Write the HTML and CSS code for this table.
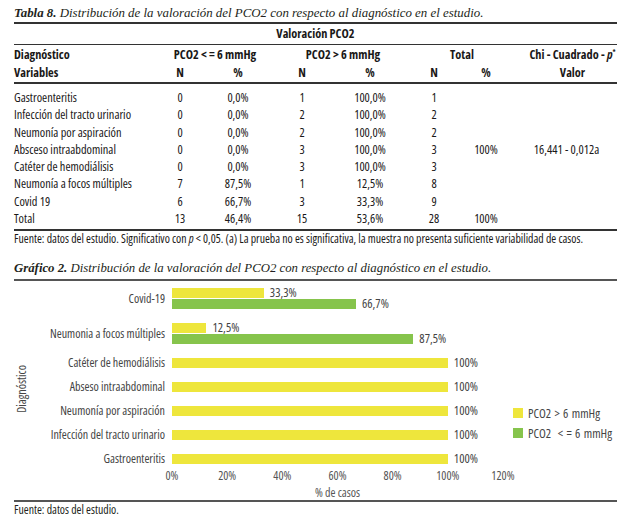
FILE: index.html
```html
<!DOCTYPE html>
<html lang="es">
<head>
<meta charset="utf-8">
<title>Tabla 8 y Gráfico 2</title>
<link rel="stylesheet" href="styles.css">
</head>
<body>
<div class="page">
  <p class="caption"><b>Tabla 8.</b> Distribución de la valoración del PCO2 con respecto al diagnóstico en el estudio.</p>

  <div class="tbl">
    <div class="tbl-top">Valoración PCO2</div>
    <div class="tbl-head">
      <div class="c1">Diagnóstico</div>
      <div class="g1">PCO2 &lt; = 6 mmHg</div>
      <div class="g2">PCO2 &gt; 6 mmHg</div>
      <div class="g3">Total</div>
      <div class="c8">Chi - Cuadrado - <i>p</i><sup>*</sup></div>
      <div class="c1">Variables</div>
      <div>N</div><div>%</div><div>N</div><div>%</div><div>N</div><div>%</div>
      <div class="c8">Valor</div>
    </div>
    <div class="tbl-body">
      <div class="c1">Gastroenteritis</div><div>0</div><div>0,0%</div><div>1</div><div>100,0%</div><div>1</div><div></div><div></div>
      <div class="c1">Infección del tracto urinario</div><div>0</div><div>0,0%</div><div>2</div><div>100,0%</div><div>2</div><div></div><div></div>
      <div class="c1">Neumonía por aspiración</div><div>0</div><div>0,0%</div><div>2</div><div>100,0%</div><div>2</div><div></div><div></div>
      <div class="c1">Absceso intraabdominal</div><div>0</div><div>0,0%</div><div>3</div><div>100,0%</div><div>3</div><div>100%</div><div class="c8 cval">16,441 - 0,012a</div>
      <div class="c1">Catéter de hemodiálisis</div><div>0</div><div>0,0%</div><div>3</div><div>100,0%</div><div>3</div><div></div><div></div>
      <div class="c1">Neumonía a focos múltiples</div><div>7</div><div>87,5%</div><div>1</div><div>12,5%</div><div>8</div><div></div><div></div>
      <div class="c1">Covid 19</div><div>6</div><div>66,7%</div><div>3</div><div>33,3%</div><div>9</div><div></div><div></div>
      <div class="c1">Total</div><div>13</div><div>46,4%</div><div>15</div><div>53,6%</div><div>28</div><div>100%</div><div></div>
    </div>
  </div>
  <p class="note">Fuente: datos del estudio. Significativo con <i>p</i> &lt; 0,05. (a) La prueba no es significativa, la muestra no presenta suficiente variabilidad de casos.</p>

  <p class="caption caption2"><b>Gráfico 2.</b> Distribución de la valoración del PCO2 con respecto al diagnóstico en el estudio.</p>

  <div class="chart">
    <div class="chart-main">
      <div class="yaxis"><span>Diagnóstico</span></div>
      <div class="rows">
        <div class="row">
          <div class="cat">Covid-19</div>
          <div class="bars">
            <div class="barline"><div class="bar yel" style="width:27.75%"></div><span class="val">33,3%</span></div>
            <div class="barline"><div class="bar grn" style="width:55.58%"></div><span class="val">66,7%</span></div>
          </div>
        </div>
        <div class="row">
          <div class="cat">Neumonia a focos múltiples</div>
          <div class="bars">
            <div class="barline"><div class="bar yel" style="width:10.42%"></div><span class="val">12,5%</span></div>
            <div class="barline"><div class="bar grn" style="width:72.92%"></div><span class="val">87,5%</span></div>
          </div>
        </div>
        <div class="row">
          <div class="cat">Catéter de hemodiálisis</div>
          <div class="bars"><div class="barline"><div class="bar yel" style="width:83.33%"></div><span class="val">100%</span></div></div>
        </div>
        <div class="row">
          <div class="cat">Abseso intraabdominal</div>
          <div class="bars"><div class="barline"><div class="bar yel" style="width:83.33%"></div><span class="val">100%</span></div></div>
        </div>
        <div class="row">
          <div class="cat">Neumonía por aspiración</div>
          <div class="bars"><div class="barline"><div class="bar yel" style="width:83.33%"></div><span class="val">100%</span></div></div>
        </div>
        <div class="row">
          <div class="cat">Infección del tracto urinario</div>
          <div class="bars"><div class="barline"><div class="bar yel" style="width:83.33%"></div><span class="val">100%</span></div></div>
        </div>
        <div class="row">
          <div class="cat">Gastroenteritis</div>
          <div class="bars"><div class="barline"><div class="bar yel" style="width:83.33%"></div><span class="val">100%</span></div></div>
        </div>
      </div>
      <div class="legend">
        <div class="leg"><span class="sw yel"></span>PCO2 &gt; 6 mmHg</div>
        <div class="leg"><span class="sw grn"></span>PCO2 &nbsp;&lt; = 6 mmHg</div>
      </div>
    </div>
    <div class="axis">
      <div class="ticks"><span>0%</span><span>20%</span><span>40%</span><span>60%</span><span>80%</span><span>100%</span><span>120%</span></div>
      <div class="axis-title">% de casos</div>
    </div>
  </div>
  <p class="note note2">Fuente: datos del estudio.</p>
</div>
</body>
</html>
```

FILE: styles.css
```css
html, body {
  margin: 0;
  padding: 0;
  background: #fff;
}

body {
  font-family: "Open Sans", "Liberation Sans", sans-serif;
  font-stretch: 75%;
  color: #1a1818;
}

.page {
  width: 603px;
  padding: 5px 13px 0 14px;
}

.caption {
  margin: 0;
  height: 17px;
  line-height: 16px;
  font-family: "Liberation Serif", serif;
  font-stretch: normal;
  font-style: italic;
  font-size: 12.9px;
  color: #231f20;
  white-space: nowrap;
}

.caption b {
  font-weight: bold;
}

.caption2 {
  margin-top: 15px;
  font-size: 12.8px;
}

.tbl {
  border-top: 2px solid #333;
  border-bottom: 2px solid #333;
  font-size: 12.3px;
}

.tbl-top {
  line-height: 20px;
  text-align: center;
  font-weight: bold;
  border-bottom: 1px solid #333;
}

.tbl-head,
.tbl-body {
  display: grid;
  grid-template-columns: 136px 60px 56px 72px 64px 64px 40px 111px;
  text-align: center;
}

.tbl-head {
  padding-top: 1px;
  grid-auto-rows: 18px;
  line-height: 18px;
  font-weight: bold;
  border-bottom: 2px solid #333;
}

.tbl-body {
  padding: 5px 0 2px;
  grid-auto-rows: 17.3px;
  line-height: 17.3px;
}

.c1 {
  text-align: left;
  white-space: nowrap;
}

.g1 {
  grid-column: span 2;
  padding-left: 14px;
  white-space: nowrap;
}

.g2 {
  grid-column: span 2;
  padding-left: 18px;
  white-space: nowrap;
}

.g3 {
  grid-column: span 2;
  padding-left: 16px;
}

.c8 {
  padding-left: 22px;
  white-space: nowrap;
}

.c8 sup {
  font-size: 7px;
  line-height: 0;
  vertical-align: 5px;
}

.cval {
  padding-left: 10px;
}

.note {
  margin: 0;
  line-height: 14px;
  font-size: 11.8px;
  white-space: nowrap;
}

.chart {
  margin-top: 2px;
  border-top: 2px solid #555;
  border-bottom: 2px solid #555;
  padding: 7px 0 0;
  color: #444;
  font-size: 12px;
}

.chart-main {
  display: flex;
  align-items: flex-start;
}

.yaxis {
  width: 16px;
  align-self: stretch;
  display: flex;
  align-items: center;
  justify-content: center;
  padding-top: 26px;
  box-sizing: border-box;
}

.yaxis span {
  writing-mode: vertical-rl;
  transform: rotate(180deg);
  font-size: 12px;
  line-height: 12px;
  white-space: nowrap;
}

.rows {
  display: flex;
  flex-direction: column;
  gap: 14px;
}

.row {
  display: flex;
  align-items: center;
}

.cat {
  width: 135px;
  margin-right: 7px;
  text-align: right;
  white-space: nowrap;
  line-height: 10px;
  font-size: 12px;
}

.bars {
  width: 331px;
  display: flex;
  flex-direction: column;
  gap: 1px;
}

.barline {
  display: flex;
  align-items: center;
  height: 10px;
}

.bar {
  height: 10px;
  flex-shrink: 0;
}

.yel {
  background: #eee63c;
}

.grn {
  background: #86c44c;
}

.val {
  margin-left: 6px;
  line-height: 10px;
  font-size: 12.5px;
  white-space: nowrap;
}

.legend {
  margin-left: 10px;
  margin-top: 115px;
  font-size: 12.5px;
  word-spacing: 1px;
}

.leg {
  display: flex;
  align-items: center;
  height: 20px;
  white-space: nowrap;
}

.sw {
  width: 10px;
  height: 10px;
  margin-right: 5px;
  flex-shrink: 0;
}

.axis {
  margin-top: 5px;
  margin-left: 143px;
  width: 361px;
  color: #555;
}

.ticks {
  display: flex;
  justify-content: space-between;
  line-height: 14px;
}

.ticks span {
  width: 30px;
  text-align: center;
}

.axis-title {
  margin-top: 2.5px;
  line-height: 14px;
  text-align: center;
}

.note2 {
  color: #231f20;
}
```
